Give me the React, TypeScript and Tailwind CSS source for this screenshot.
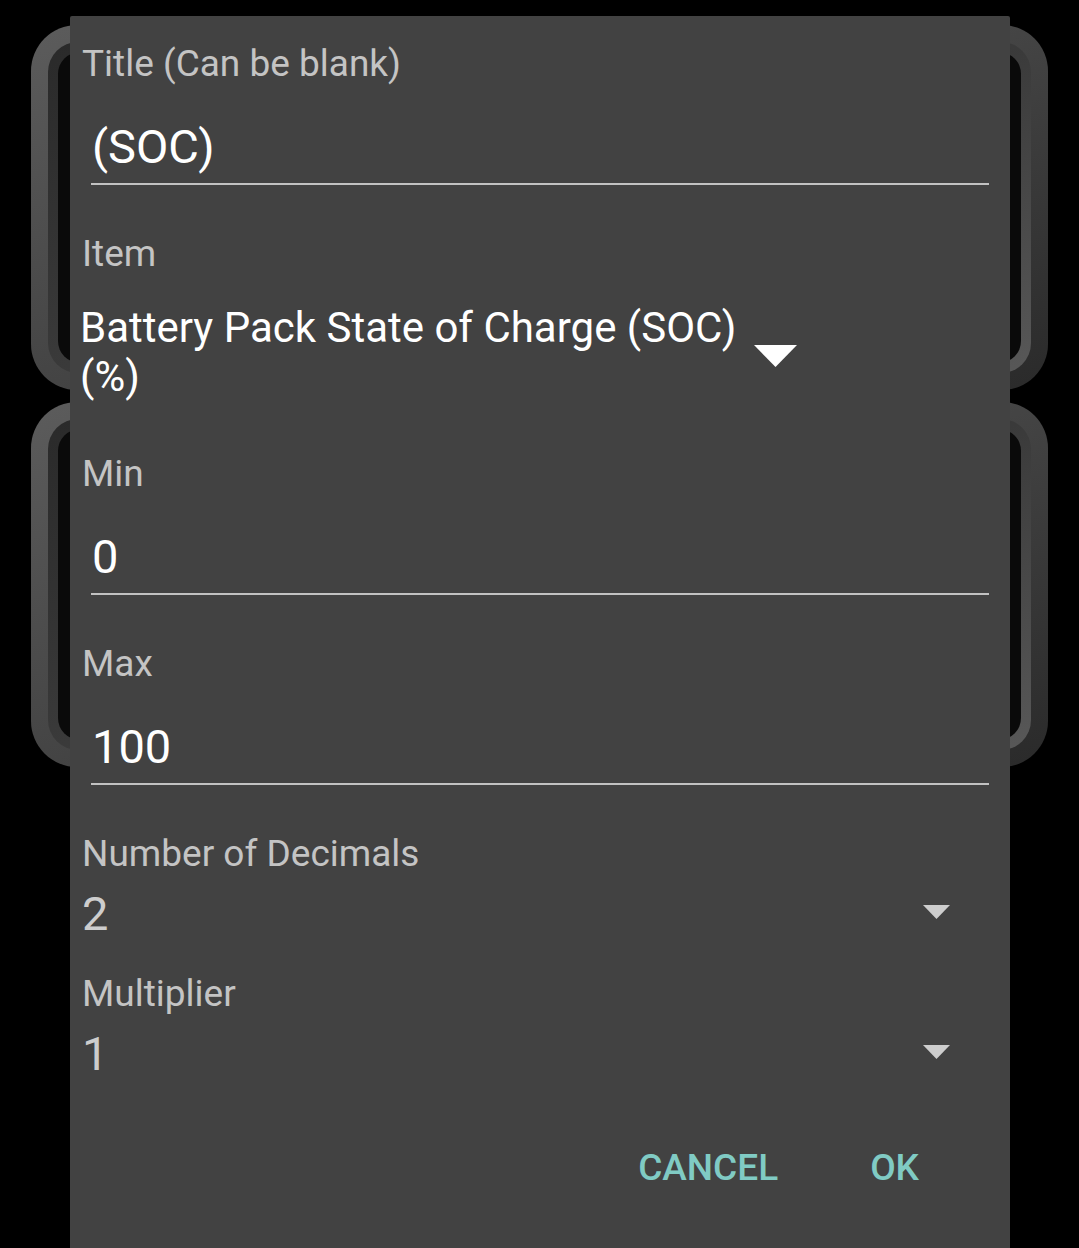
const font = { fontFamily: "Roboto, 'Noto Sans', sans-serif" };

function GaugeFrame() {
  return (
    <div className="h-[365px] rounded-[46px] p-[17px] bg-linear-to-br from-[#5c5c5c] via-[#444444] to-[#2a2a2a]">
      <div className="h-full rounded-[30px] p-[10px] bg-linear-to-br from-[#2a2a2a] via-[#3a3a3a] to-[#585858]">
        <div className="h-full rounded-[22px] bg-[#0a0a0a]" />
      </div>
    </div>
  );
}

function Label({ text, className = "" }: { text: string; className?: string }) {
  return (
    <div className={`pl-[12px] text-[37px] leading-[44px] text-[#c4c4c4] ${className}`}>
      {text}
    </div>
  );
}

function TextField({ value, className = "" }: { value: string; className?: string }) {
  return (
    <div className={`pl-[21px] pr-[21px] ${className}`}>
      <div className="pl-[1px] text-[47px] leading-[56px] text-white">{value}</div>
      <div className="mt-[8px] h-[2px] bg-[#c2c2c2]" />
    </div>
  );
}

function SpinnerRow({ value, className = "" }: { value: string; className?: string }) {
  return (
    <div className={`flex items-center justify-between pl-[12px] pr-[60px] ${className}`}>
      <span className="text-[47px] leading-[56px] text-[#cdcdcd]">{value}</span>
      <svg width="27" height="14" viewBox="0 0 27 14" className="mt-[-4px]">
        <polygon points="0,0 27,0 13.5,14" fill="#cdcdcd" />
      </svg>
    </div>
  );
}

export default function App() {
  return (
    <div className="relative h-[1248px] w-full overflow-hidden bg-black" style={font}>
      {/* gauges behind the dialog */}
      <div className="flex flex-col gap-[12px] pt-[25px] pl-[31px] pr-[31px]">
        <GaugeFrame />
        <GaugeFrame />
      </div>

      {/* settings dialog */}
      <div className="absolute left-[70px] top-[16px] bottom-0 w-[940px] rounded-t-[2px] bg-[#424242] pt-[26px]">
        <Label text="Title (Can be blank)" />
        <TextField value="(SOC)" className="mt-[33px]" />

        <Label text="Item" className="mt-[47px]" />
        <div className="mt-[27px] flex items-center pl-[10px]">
          <div className="w-[664px] text-[42px] leading-[49px] text-white">
            Battery Pack State of Charge (SOC)
            <br />
            (%)
          </div>
          <svg width="43" height="22" viewBox="0 0 43 22" className="ml-[10px] mt-[8px]">
            <polygon points="0,0 43,0 21.5,22" fill="#ffffff" />
          </svg>
        </div>

        <Label text="Min" className="mt-[51px]" />
        <TextField value="0" className="mt-[33px]" />

        <Label text="Max" className="mt-[47px]" />
        <TextField value="100" className="mt-[33px]" />

        <Label text="Number of Decimals" className="mt-[47px]" />
        <SpinnerRow value="2" className="mt-[10px]" />

        <Label text="Multiplier" className="mt-[30px]" />
        <SpinnerRow value="1" className="mt-[10px]" />

        <div className="mt-[64px] flex justify-end gap-[92px] pr-[91px] text-[37px] leading-[44px] font-medium text-[#80cbc4]">
          <button>CANCEL</button>
          <button>OK</button>
        </div>
      </div>
    </div>
  );
}
